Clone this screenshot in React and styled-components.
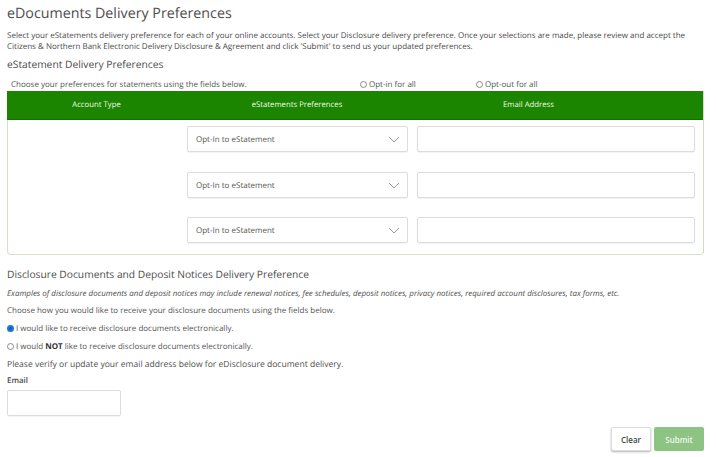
import React from "react";
import styled, { createGlobalStyle } from "styled-components";

const Global = createGlobalStyle`
  html, body { margin: 0; padding: 0; background: #fff; }
  body { font-family: "Open Sans", "Liberation Sans", sans-serif; color: #4a4a4a; text-rendering: geometricPrecision; }
  * { box-sizing: border-box; }
`;
const Page = styled.div`
  width: 716px; height: 457px; overflow: hidden;
  padding: 4px 12px 0 7px;
`;
const Title = styled.h1`
  margin: 0 0 6px; font-size: 14.25px; line-height: 20px; font-weight: 400; color: #4d4d4d;
`;
const Intro = styled.p`
  margin: 0 0 6px; font-size: 8px; line-height: 11px; color: #4a4a4a; white-space: nowrap;
`;
const SectionTitle = styled.h2`
  margin: 0; font-size: 10.25px; line-height: 14px; font-weight: 400; color: #4d4d4d;
`;
const ChooseRow = styled.div`
  display: grid; grid-template-columns: 349px 116px 1fr; align-items: center;
  height: 14px; margin-top: 5px; padding-left: 4px; font-size: 8px; color: #555;
`;
const Panel = styled.section`
  border: 1px solid #d5e0cf; border-top: 0; border-right-color: #cfdcc8; border-radius: 0 0 4px 4px;
`;
const HeaderRow = styled.div`
  display: grid; grid-template-columns: 179px 222px 241px; height: 29px; align-items: center;
  background: #1c8500; color: #f0f7ec; font-size: 7.75px; text-align: center;
  margin: 0 0 0 -1px; width: 696px; border-bottom: 1px solid #167000;
`;
const Rows = styled.div`
  display: grid; gap: 19.5px; padding: 6px 7px 11px 179px;
`;
const Row = styled.div`
  display: grid; grid-template-columns: 221px 278px; column-gap: 9px;
`;
const Field = styled.div`
  height: 26px; border: 1px solid #dcdcdc; border-radius: 2px; background: #fff;
  box-shadow: 0 1px 1px rgba(0,0,0,.05);
`;
const SelectBox = styled(Field)`
  display: flex; align-items: center; justify-content: space-between;
  padding: 1px 7px 0 8px; font-size: 8px; color: #555;
`;
const Chevron = () => (
  <svg width="12" height="7" viewBox="0 0 12 7" fill="none" stroke="#9a9a9a" strokeWidth="1">
    <path d="M1 1l5 5 5-5" />
  </svg>
);
const Disclosure = styled.div`
  margin-top: 13px;
`;
const Examples = styled.p`
  margin: 6px 0 0; font-size: 7.95px; line-height: 12px; font-style: italic; color: #4f4f4f;
`;
const Line = styled.p`
  margin: 5px 0 0; font-size: 8px; line-height: 12px; color: #555;
`;
const RadioLine = styled.label`
  display: flex; align-items: center; margin-top: ${p => p.$top}px; height: 12px; font-size: 8px; color: #555;
  b { color: #333; margin: 0 2px; font-weight: 700; }
`;
const Radio = styled.span`
  width: 7px; height: 7px; border-radius: 50%; margin-right: ${p => p.$gap || 2}px; flex: none;
  border: ${p => (p.$on ? "2px solid #1a73e8" : "1px solid #8a8a8a")};
  background: ${p => (p.$on ? "#0d5fd0" : "#fff")};
`;
const OptAll = styled.span`
  display: flex; align-items: center;
`;
const Verify = styled.p`
  margin: 6px 0 0; font-size: 8.55px; line-height: 12px; color: #4f4f4f;
`;
const EmailLabel = styled.label`
  display: block; margin-top: 5px; font-size: 7.9px; line-height: 12px; font-weight: 600; color: #4a4a4a;
`;
const EmailInput = styled(Field)`
  width: 114px; margin-top: 3px;
`;
const Actions = styled.div`
  display: flex; justify-content: flex-end; gap: 3px; margin: 11px 0 0;
`;
const ClearBtn = styled.button`
  width: 40px; height: 24px; padding: 0; font: 600 8px "Open Sans", sans-serif; color: #3f4a3f;
  background: #fff; border: 1px solid #ddd; border-radius: 2px; box-shadow: 0 1px 2px rgba(0,0,0,.3);
`;
const SubmitBtn = styled.button`
  width: 50px; height: 24px; padding: 0; font: 600 8px "Open Sans", sans-serif; color: #eef7ea;
  background: #8dc383; border: 0; border-radius: 2px;
`;

export default function App() {
  return (
    <Page>
      <Global />
      <Title>eDocuments Delivery Preferences</Title>
      <Intro>
        Select your eStatements delivery preference for each of your online accounts. Select your Disclosure delivery preference. Once your selections are made, please review and accept the<br />
        Citizens &amp; Northern Bank Electronic Delivery Disclosure &amp; Agreement and click 'Submit' to send us your updated preferences.
      </Intro>
      <SectionTitle>eStatement Delivery Preferences</SectionTitle>
      <ChooseRow>
        <span>Choose your preferences for statements using the fields below.</span>
        <OptAll><Radio $gap={2} />Opt-in for all</OptAll>
        <OptAll><Radio $gap={2} />Opt-out for all</OptAll>
      </ChooseRow>
      <Panel>
        <HeaderRow>
          <span>Account Type</span>
          <span>eStatements Preferences</span>
          <span>Email Address</span>
        </HeaderRow>
        <Rows>
          {[0, 1, 2].map(i => (
            <Row key={i}>
              <SelectBox>Opt-In to eStatement<Chevron /></SelectBox>
              <Field />
            </Row>
          ))}
        </Rows>
      </Panel>
      <Disclosure>
        <SectionTitle>Disclosure Documents and Deposit Notices Delivery Preference</SectionTitle>
        <Examples>Examples of disclosure documents and deposit notices may include renewal notices, fee schedules, deposit notices, privacy notices, required account disclosures, tax forms, etc.</Examples>
        <Line>Choose how you would like to receive your disclosure documents using the fields below.</Line>
        <RadioLine $top={5}><Radio $on />I would like to receive disclosure documents electronically.</RadioLine>
        <RadioLine $top={6}><Radio />I would <b>NOT</b> like to receive disclosure documents electronically.</RadioLine>
        <Verify>Please verify or update your email address below for eDisclosure document delivery.</Verify>
        <EmailLabel>Email</EmailLabel>
        <EmailInput />
      </Disclosure>
      <Actions>
        <ClearBtn>Clear</ClearBtn>
        <SubmitBtn>Submit</SubmitBtn>
      </Actions>
    </Page>
  );
}
